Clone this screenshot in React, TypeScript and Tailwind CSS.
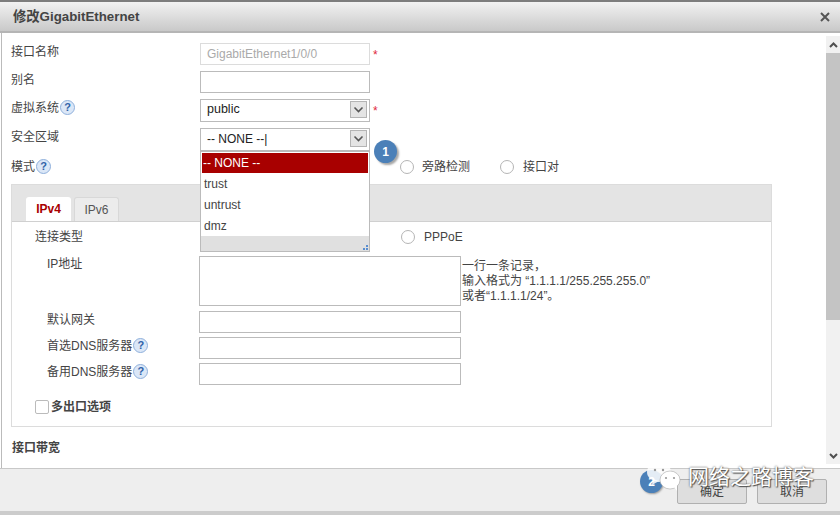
import React from "react";

const font = "font-['Liberation_Sans','Noto_Sans_CJK_SC',sans-serif]";

const Help = () => (
  <span className="inline-flex w-[15px] h-[15px] rounded-full border border-[#8fb0dc] bg-[#dbe7f7] text-[#2f62a8] text-[11px] font-bold items-center justify-center leading-none ml-px shrink-0">
    ?
  </span>
);

const Radio = ({ className = "" }: { className?: string }) => (
  <span className={`inline-block w-[14px] h-[14px] rounded-full border border-[#b5b5b5] bg-white shrink-0 ${className}`} />
);

const Arrow = () => (
  <span className="w-[17px] h-[17px] border border-[#b4b4b4] bg-[#e4e4e4] flex items-center justify-center">
    <svg width="11" height="7" viewBox="0 0 11 7" fill="none">
      <path d="M1.5 1.5 L5.5 5.5 L9.5 1.5" stroke="#555" strokeWidth="1.6" />
    </svg>
  </span>
);

const Star = () => <span className="text-[#e0283c] text-[12px] ml-[3px] mt-[6px] leading-none">*</span>;

const Field = ({ label, help, children, h = "h-[28px]" }: { label: string; help?: boolean; children?: React.ReactNode; h?: string }) => (
  <div className={`flex ${h}`}>
    <div className="w-[189px] flex items-start text-[12px] text-[#444] leading-[17px] pt-[1px]">
      {label}
      {help && <Help />}
    </div>
    <div className="flex items-start">{children}</div>
  </div>
);

const Input = ({ value, disabled }: { value?: string; disabled?: boolean }) => (
  <div
    className={`w-[170px] h-[22px] border px-[6px] flex items-center text-[12px] ${
      disabled ? "border-[#dcdcdc] text-[#aaa]" : "border-[#bbb] text-[#333]"
    }`}
  >
    {value}
  </div>
);

const SubField = ({ label, help }: { label: string; help?: boolean }) => (
  <div className="flex h-[26px]">
    <div className="w-[164px] pl-[12px] flex items-start text-[12px] text-[#444] leading-[16px] pt-px">
      {label}
      {help && <Help />}
    </div>
    <div className="w-[262px] h-[22px] border border-[#bbb]" />
  </div>
);

export default function App() {
  return (
    <div className={`${font} w-[840px] h-[515px] relative overflow-hidden bg-white flex flex-col`}>
      <div className="h-[33px] shrink-0 border-t-2 border-[#7d7d7d] border-b-2 border-b-[#b5b5b5] bg-gradient-to-b from-[#f2f2f2] to-[#c9c9c9] flex items-center justify-between pl-[13px] pr-[10px]">
        <span className="text-[13.3px] font-bold text-[#444]">修改GigabitEthernet</span>
        <svg width="10" height="10" viewBox="0 0 10 10">
          <path d="M1 1 L9 9 M9 1 L1 9" stroke="#555" strokeWidth="2" />
        </svg>
      </div>

      <div className="flex-1 flex min-h-0 border-l border-[#bbb] ml-px">
        <div className="flex-1 pl-[9px] pt-[10px] pr-[54px] overflow-hidden">
          <Field label="接口名称">
            <Input value="GigabitEthernet1/0/0" disabled />
            <Star />
          </Field>
          <Field label="别名">
            <Input />
          </Field>
          <Field label="虚拟系统" help h="h-[29px]">
            <div className="w-[170px] h-[23px] border border-[#bbb] pl-[6px] pr-[2px] pb-[2px] flex items-center justify-between text-[12.5px] text-[#222]">
              public
              <Arrow />
            </div>
            <Star />
          </Field>
          <Field label="安全区域" h="h-[30px]">
            <div className="w-[170px] h-[23px] border border-[#bbb] pl-[6px] pr-[2px] pb-[2px] flex items-center justify-between text-[12px] text-[#222]">
              <span>-- NONE --|</span>
              <Arrow />
            </div>
          </Field>
          <Field label="模式" help h="h-[26px]">
            <div className="flex items-center h-[17px] ml-[200px] text-[12px] text-[#444]">
              <Radio />
              <span className="ml-[8px] w-[78px]">旁路检测</span>
              <Radio />
              <span className="ml-[9px]">接口对</span>
            </div>
          </Field>

          <div className="w-[761px] h-[243px] border border-[#dcdcdc]">
            <div className="h-[37px] bg-[#e4e4e4] border-b border-[#d0d0d0] flex items-end pl-[14px] gap-[3px] pt-[13px]">
              <div className="w-[45px] h-[24px] bg-white rounded-t-[3px] flex items-center justify-center text-[12px] font-bold text-[#a80000]">
                IPv4
              </div>
              <div className="w-[45px] h-[24px] bg-[#ececec] border border-[#d8d8d8] border-b-0 rounded-t-[3px] flex items-center justify-center text-[12px] text-[#555]">
                IPv6
              </div>
            </div>
            <div className="pl-[23px] pt-[7px]">
              <div className="flex items-center h-[16px] text-[12px] text-[#444]">
                <span className="w-[366px]">连接类型</span>
                <Radio />
                <span className="ml-[9px]">PPPoE</span>
              </div>
              <div className="flex mt-[11px] h-[55px]">
                <div className="w-[164px] pl-[12px] text-[12px] text-[#444] leading-[16px]">IP地址</div>
                <div className="w-[262px] h-[50px] border border-[#bbb]" />
                <div className="ml-[1px] pt-[3px] text-[12px] leading-[15px] text-[#444] whitespace-nowrap">
                  一行一条记录，
                  <br />
                  输入格式为 “1.1.1.1/255.255.255.0”
                  <br />
                  或者“1.1.1.1/24”。
                </div>
              </div>
              <SubField label="默认网关" />
              <SubField label="首选DNS服务器" help />
              <SubField label="备用DNS服务器" help />
              <div className="flex items-center mt-[9px] text-[12px] font-bold text-[#444]">
                <span className="w-[14px] h-[14px] border border-[#bbb] rounded-[2px] mr-[2px] bg-white" />
                多出口选项
              </div>
            </div>
          </div>
          <div className="mt-[12px] ml-px text-[12px] font-bold text-[#444]">接口带宽</div>
        </div>

        <div className="w-[14px] shrink-0 bg-[#f1f1f1] flex flex-col mt-[3px] mb-[4px]">
          <div className="h-[17px] flex items-center justify-center">
            <svg width="9" height="6" viewBox="0 0 9 6" fill="none">
              <path d="M1 5 L4.5 1.5 L8 5" stroke="#505050" strokeWidth="2" />
            </svg>
          </div>
          <div className="h-[267px] bg-[#c4c4c4]" />
          <div className="flex-1" />
          <div className="h-[17px] flex items-center justify-center">
            <svg width="9" height="6" viewBox="0 0 9 6" fill="none">
              <path d="M1 1 L4.5 4.5 L8 1" stroke="#505050" strokeWidth="2" />
            </svg>
          </div>
        </div>
      </div>

      <div className="h-[43px] shrink-0 border-t border-[#c8c8c8] bg-[#eeeeee] flex items-start justify-end gap-[10px] pt-[10px] pr-[13px]">
        <div className="w-[70px] h-[25px] border border-[#b0b0b0] rounded-[2px] bg-[#dedede] flex items-center justify-center text-[12px] text-[#444]">
          确定
        </div>
        <div className="w-[70px] h-[25px] border border-[#b0b0b0] rounded-[2px] bg-[#dedede] flex items-center justify-center text-[12px] text-[#444]">
          取消
        </div>
      </div>
      <div className="h-[4px] shrink-0 bg-[#cccccc]" />

      {/* dropdown of 安全区域 */}
      <div className="absolute left-[200px] top-[151px] w-[170px] h-[101px] border border-[#bbb] bg-white flex flex-col text-[12px] text-[#444]">
        <div className="mx-px mt-px h-[20px] bg-[#a80000] text-white px-[1px] flex items-center">-- NONE --</div>
        <div className="h-[21px] px-[3px] flex items-center">trust</div>
        <div className="h-[21px] px-[3px] flex items-center">untrust</div>
        <div className="h-[21px] px-[3px] flex items-center">dmz</div>
        <div className="flex-1 bg-[#e0e0e0] relative">
          <span className="absolute right-[1px] bottom-[1px] w-[5px] h-[5px] text-[0px]">
            <svg width="5" height="5" viewBox="0 0 5 5">
              <rect x="3" y="0" width="2" height="2" fill="#5b8fd0" />
              <rect x="0" y="3" width="2" height="2" fill="#5b8fd0" />
              <rect x="3" y="3" width="2" height="2" fill="#5b8fd0" />
            </svg>
          </span>
        </div>
      </div>

      {/* step badges */}
      <div className="absolute left-[374px] top-[140px] w-[23px] h-[23px] rounded-full bg-[#4b80b8] shadow-[2px_2px_2px_rgba(0,0,0,0.35)] text-white text-[12px] font-bold flex items-center justify-center">
        1
      </div>
      <div className="absolute left-[640px] top-[470px] w-[23px] h-[23px] rounded-full bg-[#4b80b8] shadow-[1px_1px_2px_rgba(0,0,0,0.35)] text-white text-[12px] font-bold flex items-center justify-center">
        2
      </div>

      {/* watermark */}
      <div className="absolute left-[646px] top-[461px] flex items-start">
        <svg width="36" height="32" viewBox="0 0 36 32">
          <ellipse cx="13" cy="11" rx="12" ry="10" fill="#fff" fillOpacity="0.85" />
          <path d="M7 18 L6 24 L13 20 Z" fill="#fff" fillOpacity="0.85" />
          <ellipse cx="24" cy="19" rx="10" ry="9" fill="#fff" stroke="#aaa" strokeWidth="0.6" />
          <path d="M28 26 L31 30 L31 24 Z" fill="#fff" />
          <circle cx="9" cy="9" r="1.2" fill="#999" />
          <circle cx="17" cy="9" r="1.2" fill="#999" />
          <circle cx="20" cy="17" r="1.1" fill="#999" />
          <circle cx="28" cy="17" r="1.1" fill="#999" />
        </svg>
      </div>
      <div className="absolute left-[688px] top-[464px] text-[21px] leading-[26px] text-white [text-shadow:0_0_2px_#444,1px_1px_1px_#555] whitespace-nowrap">
        网络之路博客
      </div>
    </div>
  );
}
